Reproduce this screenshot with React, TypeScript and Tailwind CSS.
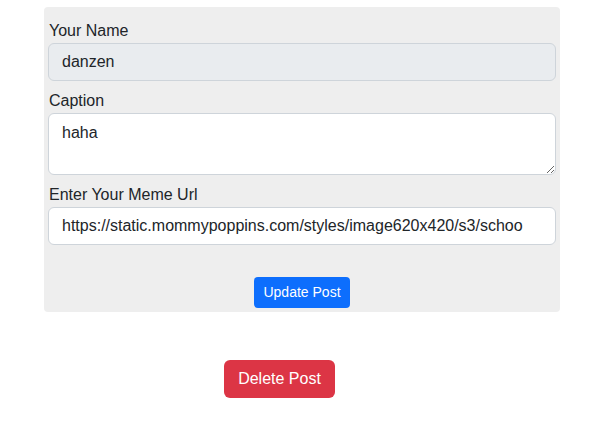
import React from "react";

export default function App() {
  const url = "https://static.mommypoppins.com/styles/image620x420/s3/schoo";
  return (
    <div
      className="w-[599px] h-[438px] bg-white text-[#212529] text-[16px] leading-[24px]"
      style={{ fontFamily: '"Liberation Sans", Arial, sans-serif' }}
    >
      <div className="pt-[7px]">
        <div className="ml-[44px] w-[516px] bg-[#eeeeee] rounded-[4px] px-[4px] pt-[12px] pb-[4px] flex flex-col">
          <label className="block pl-[1px]">Your Name</label>
          <input
            readOnly
            value="danzen"
            className="h-[38px] w-full bg-[#e9ecef] border border-[#ced4da] rounded-[6px] pl-[13px] pr-[12px] text-[#212529] outline-none"
          />
          <label className="block mt-[8px] pl-[1px]">Caption</label>
          <textarea
            readOnly
            value="haha"
            className="h-[62px] w-full bg-white border border-[#ced4da] rounded-[6px] pl-[13px] pr-[12px] pt-[7px] pb-[6px] text-[#212529] outline-none block"
          />
          <label className="block mt-[8px] pl-[1px]">Enter Your Meme Url</label>
          <input
            readOnly
            value={url}
            className="h-[38px] w-full bg-white border border-[#ced4da] rounded-[6px] pl-[13px] pr-[12px] text-[#212529] outline-none"
          />
          <div className="flex justify-center mt-[32px]">
            <button className="h-[31px] w-[96px] bg-[#0d6efd] text-white text-[14px] leading-[21px] rounded-[4px]">
              Update Post
            </button>
          </div>
        </div>
      </div>
      <div className="mt-[48px] ml-[224px]">
        <button className="h-[38px] w-[111px] bg-[#dc3545] text-white rounded-[6px]">
          Delete Post
        </button>
      </div>
    </div>
  );
}
